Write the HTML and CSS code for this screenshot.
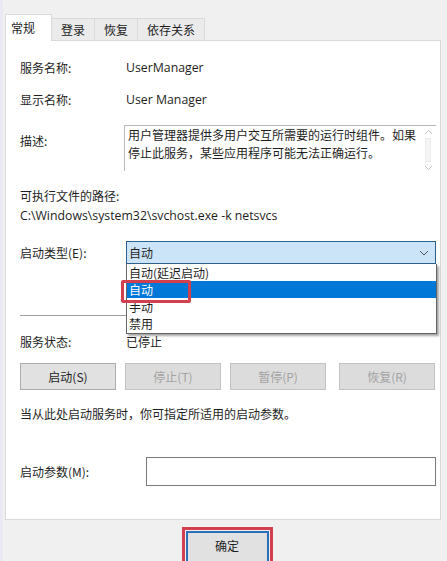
FILE: index.html
```html
<!DOCTYPE html>
<html lang="zh-CN">
<head>
<meta charset="utf-8">
<title>UserManager 属性</title>
<link rel="stylesheet" href="styles.css">
</head>
<body>
<div class="window">
  <div class="tabs">
    <div class="tab active">常规</div>
    <div class="tab">登录</div>
    <div class="tab">恢复</div>
    <div class="tab">依存关系</div>
  </div>
  <div class="panel">
    <div class="row r1"><div class="label">服务名称:</div><div class="value latin">UserManager</div></div>
    <div class="row r2"><div class="label">显示名称:</div><div class="value latin">User Manager</div></div>
    <div class="row desc">
      <div class="label desc-label">描述:</div>
      <div class="textbox">
        <div class="textbox-text">用户管理器提供多用户交互所需要的运行时组件。如果停止此服务，某些应用程序可能无法正确运行。</div>
        <div class="scroll">
          <svg width="9" height="6" viewBox="0 0 9 6"><path d="M1 5 L4.5 1.5 L8 5" fill="none" stroke="#c4c4c4" stroke-width="1"/></svg>
          <div class="thumb"></div>
          <svg width="9" height="6" viewBox="0 0 9 6"><path d="M1 1 L4.5 4.5 L8 1" fill="none" stroke="#c4c4c4" stroke-width="1"/></svg>
        </div>
      </div>
    </div>
    <div class="path-label">可执行文件的路径:</div>
    <div class="path latin">C:\Windows\system32\svchost.exe -k netsvcs</div>
    <div class="row start">
      <div class="label">启动类型(E):</div>
      <div class="combo-wrap">
        <div class="combo">
          <span>自动</span>
          <svg width="10" height="6" viewBox="0 0 10 6"><path d="M1 1 L5 5 L9 1" fill="none" stroke="#555" stroke-width="1"/></svg>
        </div>
        <div class="dropdown">
          <div class="opt">自动(延迟启动)</div>
          <div class="opt selected">自动</div>
          <div class="opt">手动</div>
          <div class="opt">禁用</div>
        </div>
        <div class="mark mark-opt"></div>
      </div>
    </div>
    <div class="sep"></div>
    <div class="row status"><div class="label">服务状态:</div><div class="value">已停止</div></div>
    <div class="buttons">
      <div class="btn">启动(S)</div>
      <div class="btn disabled">停止(T)</div>
      <div class="btn disabled">暂停(P)</div>
      <div class="btn disabled">恢复(R)</div>
    </div>
    <div class="hint">当从此处启动服务时，你可指定所适用的启动参数。</div>
    <div class="row param">
      <div class="label param-label">启动参数(M):</div>
      <div class="input"></div>
    </div>
  </div>
  <div class="footer">
    <div class="ok-mark">
      <div class="ok">确定</div>
    </div>
  </div>
</div>
</body>
</html>
```

FILE: styles.css
```css
* { box-sizing: border-box; }
html, body { margin: 0; padding: 0; }
body {
  width: 447px;
  height: 561px;
  overflow: hidden;
  background: #f0f0f0;
  font-family: "Noto Sans CJK SC", "Open Sans", sans-serif;
  font-size: 12px;
  color: #1e1e1e;
}
.window {
  height: 561px;
  border-left: 3px solid #ebe7f5;
  display: flex;
  flex-direction: column;
}
.tabs {
  height: 40px;
  padding: 14px 0 0 2px;
  display: flex;
  align-items: flex-end;
}
.tab {
  height: 22px;
  padding: 0 9px;
  line-height: 21px;
  background: #ebebeb;
  border: 1px solid #dadada;
  border-bottom: none;
  border-left: none;
}
.tab.active {
  height: 27px;
  background: #fff;
  border-left: 1px solid #dadada;
  padding: 0 16px 0 5px;
  line-height: 26px;
  position: relative;
  z-index: 1;
  margin-bottom: -1px;
}
.panel {
  background: #fff;
  border: 1px solid #dadada;
  margin: 0 6px 0 2px;
  padding: 19px 0 33px 14px;
  height: 481px;
}
.row {
  display: flex;
  align-items: center;
}
.label {
  width: 106px;
  flex: none;
  line-height: 16px;
}
.value { line-height: 16px; }
.latin {
  font-family: "Open Sans", "Noto Sans CJK SC", sans-serif;
  font-size: 12.3px;
}
.r1 { height: 16px; }
.r2 { height: 16px; margin-top: 16px; }
.desc { align-items: flex-start; margin-top: 17px; }
.desc-label { padding-top: 8px; width: 104px; }
.textbox {
  width: 312px;
  height: 46px;
  border: 1px solid #b9b9b9;
  border-right: none;
  border-bottom: none;
  display: flex;
  padding: 0 0 0 3px;
}
.textbox-text {
  flex: 1;
  line-height: 18px;
  font-size: 12px;
}
.scroll {
  width: 14px;
  margin: 3px 1px 0 0;
  display: flex;
  flex-direction: column;
  align-items: center;
  gap: 3px;
}
.thumb {
  width: 6px;
  height: 24px;
  background: #f4f4f4;
  border: 1px solid #ebebeb;
}
.path-label { margin-top: 17px; line-height: 16px; }
.path { margin-top: 4px; line-height: 16px; }
.start { margin-top: 17px; }
.combo-wrap {
  position: relative;
  width: 310px;
}
.combo {
  height: 23px;
  background: #cce4f7;
  border: 1px solid #2e5f8f;
  display: flex;
  align-items: center;
  justify-content: space-between;
  padding: 0 6px 0 2px;
}
.dropdown {
  position: absolute;
  left: 0;
  top: 23px;
  width: 311px;
  background: #fff;
  border: 1px solid #646464;
  border-top: none;
  box-shadow: 2px 2px 2px rgba(0,0,0,0.35);
  z-index: 2;
  padding-bottom: 1px;
}
.opt {
  height: 17px;
  line-height: 17px;
  padding-left: 2px;
}
.opt.selected {
  background: #0078d7;
  color: #fff;
}
.mark-opt {
  position: absolute;
  left: -5px;
  top: 39px;
  width: 70px;
  height: 23px;
  border: 3px solid #d2404f;
  border-radius: 2px;
  z-index: 3;
}
.sep {
  margin-top: 51px;
  margin-right: 14px;
  height: 1px;
  background: #a0a0a0;
}
.status { margin-top: 18px; height: 16px; }
.buttons {
  margin-top: 13px;
  display: flex;
  gap: 9px;
}
.btn {
  flex: none;
  width: 96px;
  height: 27px;
  background: #e1e1e1;
  border: 1px solid #adadad;
  display: flex;
  align-items: center;
  justify-content: center;
}
.btn:last-child { margin-left: 4px; }
.btn.disabled { color: #a3a3a3; background: #dcdcdc; border-color: #c2c2c2; }
.hint { margin-top: 16px; line-height: 16px; }
.param { margin-top: 35px; }
.param-label { width: 126px; }
.input {
  width: 290px;
  height: 29px;
  border: 1px solid #7a7a7a;
}
.footer {
  flex: 1;
  display: flex;
  justify-content: center;
  padding: 7px 0 0 4px;
}
.ok-mark {
  width: 91px;
  height: 40px;
  border: 3px solid #d2404f;
  border-bottom: none;
  padding: 1px 1px 0 1px;
}
.ok {
  height: 34px;
  background: #e1e1e1;
  border: 2px solid #2a6fb8;
  display: flex;
  align-items: center;
  justify-content: center;
  padding-bottom: 6px;
}
```
